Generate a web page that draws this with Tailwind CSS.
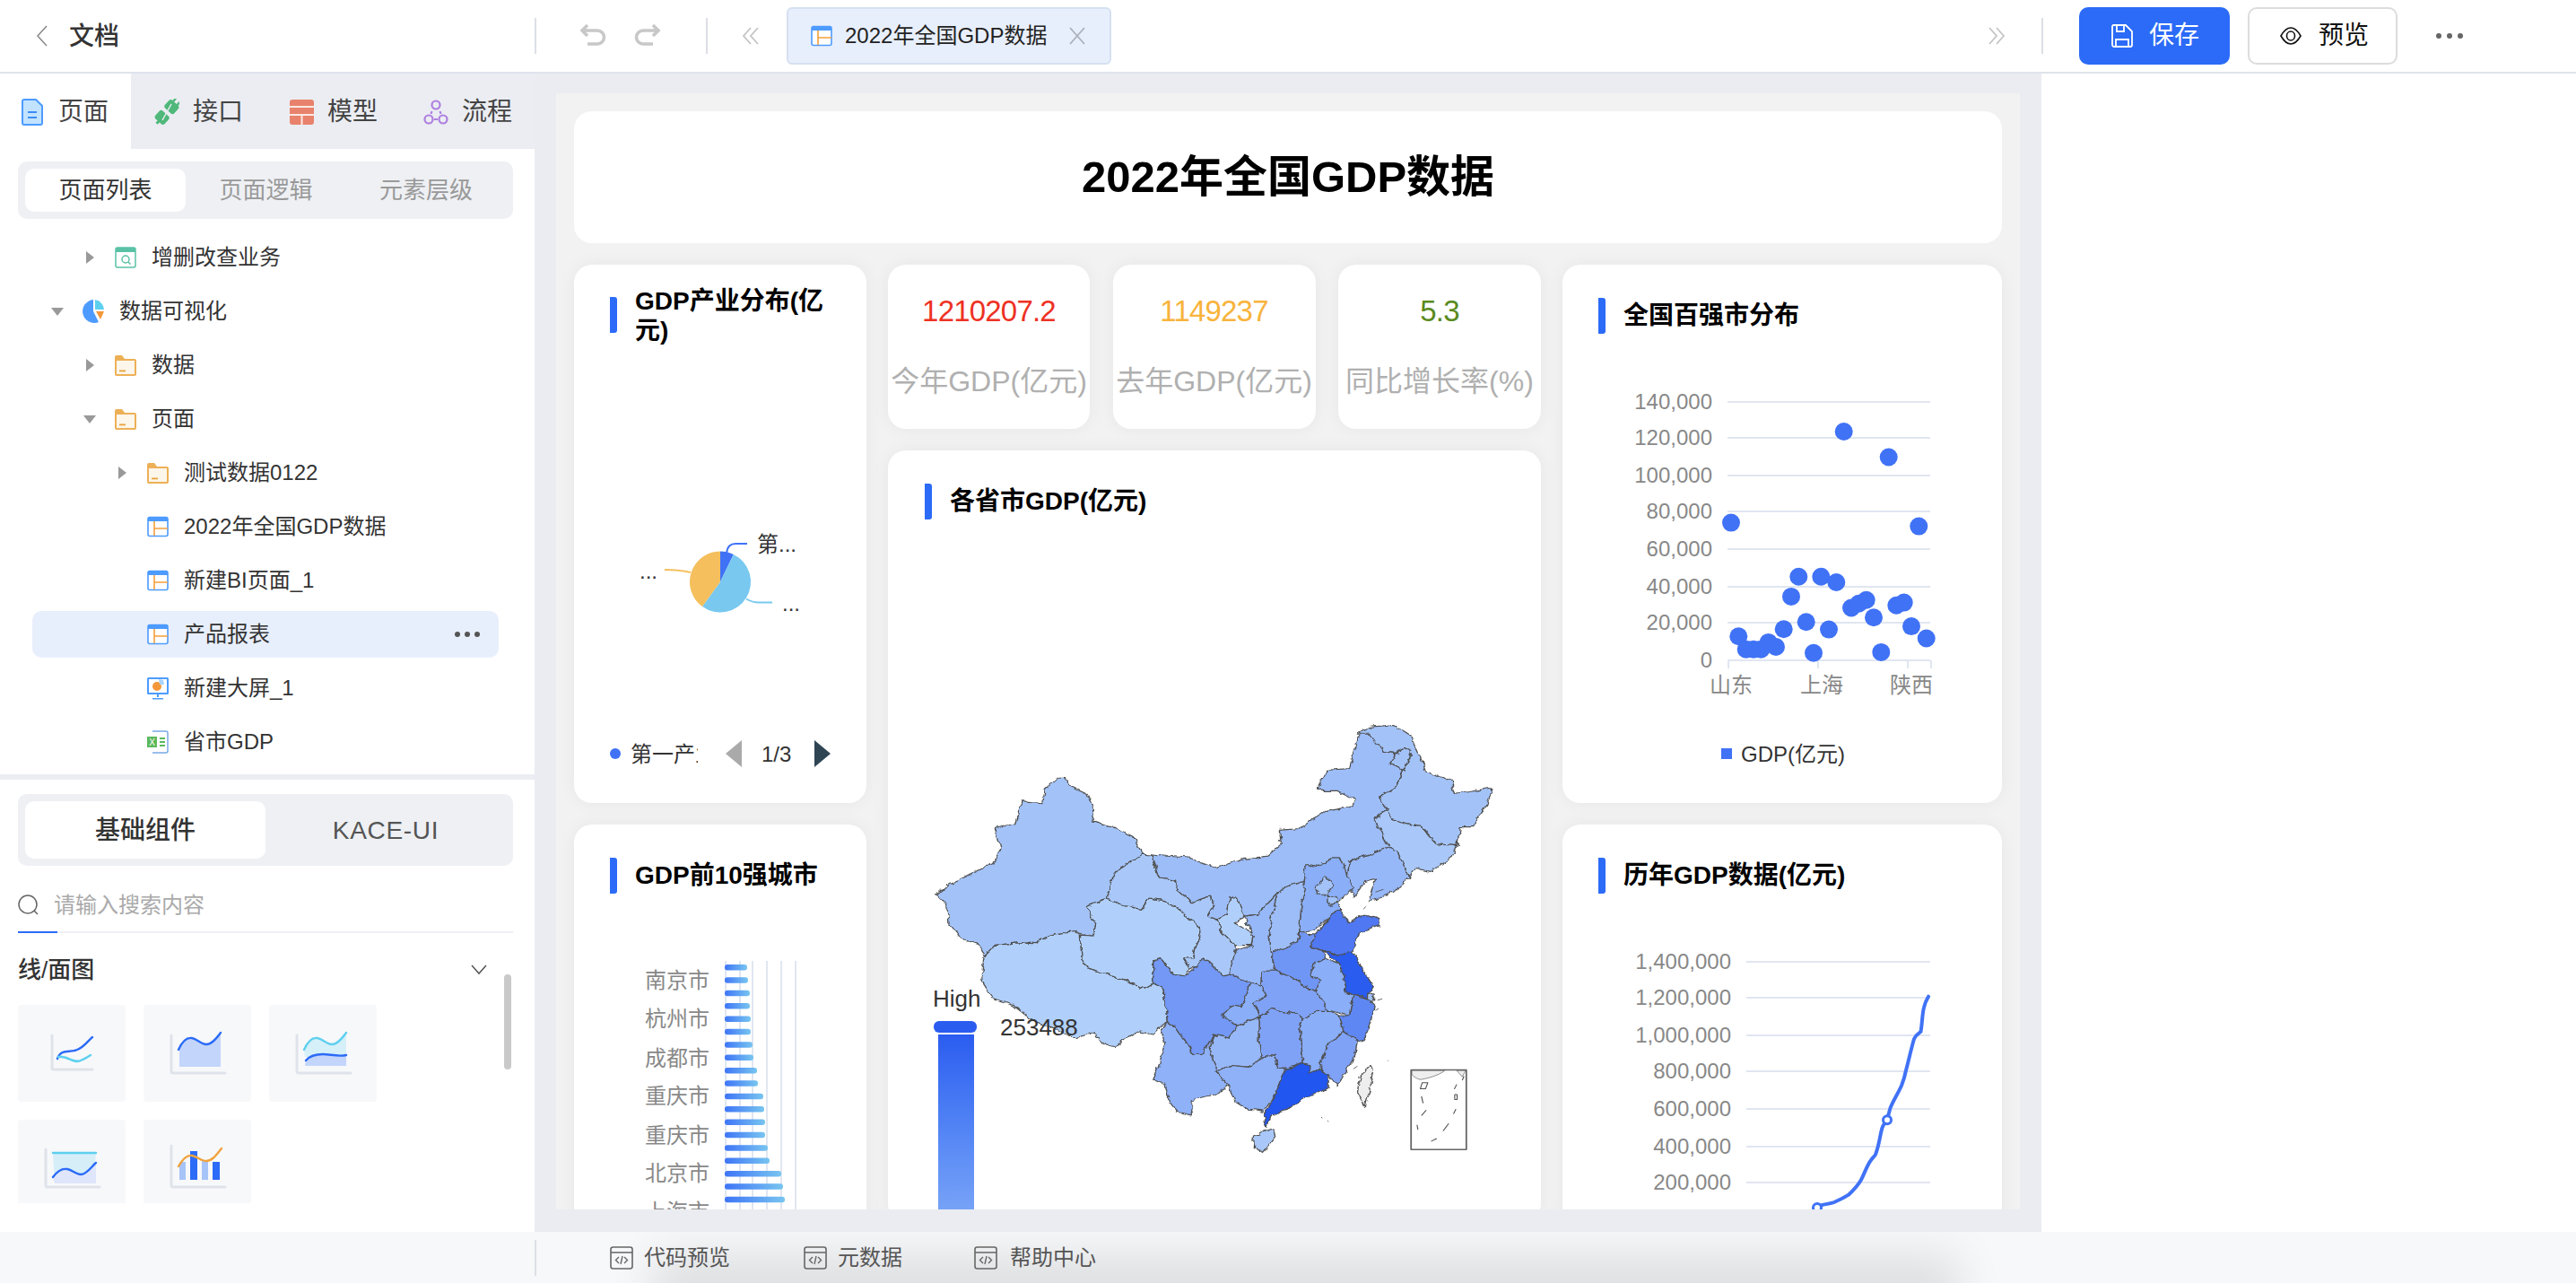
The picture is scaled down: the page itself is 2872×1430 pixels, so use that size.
<!DOCTYPE html>
<html lang="zh-CN">
<head>
<meta charset="UTF-8">
<title>2022年全国GDP数据</title>
<script src="https://cdn.jsdelivr.net/npm/@tailwindcss/browser@4"></script>
</head>
<body class="w-[2872px] h-[1430px] overflow-hidden bg-white text-[#333] font-['Liberation_Sans','Noto_Sans_CJK_SC',sans-serif]">

<svg class="hidden">
  <symbol id="i-page" viewBox="0 0 24 24">
    <rect x="1" y="1.5" width="22" height="21" rx="2" fill="#fff" stroke="#4d9bff" stroke-width="1.6"/>
    <path d="M1 3.5a2 2 0 0 1 2-2h18a2 2 0 0 1 2 2V6H1z" fill="#4d9bff"/>
    <path d="M8 6v16M8 14h15" stroke="#f3a03c" stroke-width="1.6" fill="none"/>
  </symbol>
  <symbol id="i-folder" viewBox="0 0 24 24">
    <path d="M0 3a2 2 0 0 1 2-2h6l3 4h11a2 2 0 0 1 2 2v15a2 2 0 0 1-2 2H2a2 2 0 0 1-2-2z" fill="#edb056"/>
    <rect x="2" y="7" width="20" height="15" fill="#fdf6ea"/>
    <rect x="5" y="17.500" width="7" height="1.800" fill="#e9a33e"/>
  </symbol>
  <symbol id="i-code" viewBox="0 0 26 26">
    <rect x="1" y="1" width="24" height="24" rx="2.500" fill="none" stroke="#666" stroke-width="1.600"/>
    <path d="M1 7h24M10 12l-3.500 3.500L10 19M16 12l3.500 3.500L16 19M14 11l-2 9" fill="none" stroke="#666" stroke-width="1.400"/>
  </symbol>
</svg>

<!-- top bar -->
<header class="flex h-[82px] border-b-2 border-[#dfe3ec] bg-white">
  <div class="flex h-[80px] w-[596px] shrink-0 items-center pl-[40px]">
    <svg class="h-[26px] w-[14px]" viewBox="0 0 14 26" fill="none" stroke="#888" stroke-width="1.500"><path d="M12 2L2 13l10 11"/></svg>
    <span class="ml-[23px] pt-[2px] text-[28px] font-medium">文档</span>
  </div>
  <div class="flex h-[80px] flex-1 items-center">
    <div class="h-[40px] w-[2px] bg-[#dcdfe6]"></div>
    <svg class="ml-[48px] h-[28px] w-[30px]" viewBox="0 0 30 28" fill="none" stroke="#c8c8c8" stroke-width="3.600"><path d="M9 2L3 8l6 6M3 8h17a7 7 0 0 1 0 15H9"/></svg>
    <svg class="ml-[31px] h-[28px] w-[30px]" viewBox="0 0 30 28" fill="none" stroke="#c8c8c8" stroke-width="3.600"><path d="M21 2l6 6-6 6M27 8H10a7 7 0 0 0 0 15h11"/></svg>
    <div class="ml-[50px] h-[40px] w-[2px] bg-[#dcdfe6]"></div>
    <svg class="ml-[38px] h-[20px] w-[20px]" viewBox="0 0 20 20" fill="none" stroke="#c4c4c4" stroke-width="1.800"><path d="M10 1L2 10l8 9M18 1l-8 9 8 9"/></svg>
    <div class="ml-[30px] flex h-[64px] w-[362px] items-center rounded-[6px] border-2 border-[#d5e0f0] bg-[#e8effc] pl-[25px]">
      <svg class="h-[24px] w-[24px]"><use href="#i-page"/></svg>
      <span class="ml-[14px] text-[24px] text-[#222]">2022年全国GDP数据</span>
      <svg class="ml-[24px] h-[20px] w-[20px]" viewBox="0 0 20 20" fill="none" stroke="#aab0ba" stroke-width="1.800"><path d="M2 1l16 18M18 1L2 19"/></svg>
    </div>
    <svg class="ml-auto mr-[40px] h-[20px] w-[20px]" viewBox="0 0 20 20" fill="none" stroke="#c4c4c4" stroke-width="1.800"><path d="M2 1l8 9-8 9M10 1l8 9-8 9"/></svg>
  </div>
  <div class="flex h-[80px] w-[596px] shrink-0 items-center">
    <div class="h-[40px] w-[2px] bg-[#dcdfe6]"></div>
    <button class="ml-[40px] flex h-[64px] w-[168px] items-center rounded-[10px] bg-[#2b6bf7] pl-[36px] text-[28px] text-white">
      <svg class="h-[26px] w-[24px]" viewBox="0 0 24 26" fill="none" stroke="#fff" stroke-width="1.800"><path d="M2 1h14l7 7v15a2 2 0 0 1-2 2H3a2 2 0 0 1-2-2V2zM6 1v7h8V1M5 25v-8h14v8"/></svg>
      <span class="ml-[18px]">保存</span>
    </button>
    <button class="ml-[20px] flex h-[64px] w-[167px] items-center rounded-[10px] border-2 border-[#dcdcdc] bg-white pl-[34px] text-[28px] text-[#111]">
      <svg class="h-[22px] w-[24px]" viewBox="0 0 24 22" fill="none" stroke="#111" stroke-width="1.600"><path d="M1 11C5 4 8 2 12 2s7 2 11 9c-4 7-7 9-11 9s-7-2-11-9z"/><ellipse cx="12" cy="11" rx="4.500" ry="5"/></svg>
      <span class="ml-[19px]">预览</span>
    </button>
    <div class="ml-[43px] flex gap-[6px]">
      <i class="h-[6px] w-[6px] rounded-full bg-[#666]"></i><i class="h-[6px] w-[6px] rounded-full bg-[#666]"></i><i class="h-[6px] w-[6px] rounded-full bg-[#666]"></i>
    </div>
  </div>
</header>

<div class="flex h-[1291px]">
  <!-- left panel -->
  <aside class="flex w-[596px] shrink-0 flex-col bg-white">
    <nav class="flex h-[84px] bg-[#ebedf2] pt-[2px] text-[28px] text-[#444]">
      <div class="-mt-[2px] flex w-[146px] items-center bg-white pl-[24px] pt-[2px]">
        <svg class="h-[30px] w-[24px]" viewBox="0 0 24 30"><path d="M3 1h13l7 7v19a2 2 0 0 1-2 2H3a2 2 0 0 1-2-2V3a2 2 0 0 1 2-2z" fill="#c2e3ff" stroke="#4d9bff" stroke-width="2"/><path d="M7 15h10M7 21h10" stroke="#3b8cf5" stroke-width="2"/></svg>
        <span class="ml-[17px]">页面</span>
      </div>
      <div class="flex w-[150px] items-center pl-[26px]">
        <svg class="h-[30px] w-[28px]" viewBox="0 0 28 30"><g transform="rotate(42 14 15)" fill="#4fb87a"><rect x="7" y="1" width="14" height="12" rx="3"/><rect x="7" y="17" width="14" height="12" rx="3"/><rect x="10" y="-3" width="2.500" height="5"/><rect x="16" y="-3" width="2.500" height="5"/><rect x="12.500" y="28" width="3" height="4"/></g><path d="M9 24l10-18" stroke="#ebedf2" stroke-width="1.500"/></svg>
        <span class="ml-[15px]">接口</span>
      </div>
      <div class="flex w-[150px] items-center pl-[27px]">
        <svg class="h-[28px] w-[27px]" viewBox="0 0 27 28"><rect width="27" height="28" rx="3" fill="#e8826c"/><path d="M0 8h27M0 17h27M13.500 17v11M0 8" stroke="#fbe9e4" stroke-width="2" fill="none"/></svg>
        <span class="ml-[15px]">模型</span>
      </div>
      <div class="flex w-[150px] items-center pl-[26px]">
        <svg class="h-[28px] w-[28px]" viewBox="0 0 28 28" fill="none" stroke="#ae7fe0" stroke-width="2.200"><circle cx="14" cy="6" r="4.500"/><circle cx="6" cy="22" r="4.500"/><circle cx="22" cy="22" r="4.500"/><path d="M9.500 13l-1 3M18.500 13l1 3M12 22h4"/></svg>
        <span class="ml-[15px]">流程</span>
      </div>
    </nav>
    <div class="mx-[20px] mt-[14px] flex h-[64px] w-[552px] items-center rounded-[10px] bg-[#eef0f4] px-[8px] text-[26px] text-[#999]">
      <div class="flex h-[48px] w-[179px] items-center justify-center rounded-[10px] bg-white text-[#333]">页面列表</div>
      <div class="flex h-[48px] w-[179px] items-center justify-center">页面逻辑</div>
      <div class="flex h-[48px] w-[178px] items-center justify-center">元素层级</div>
    </div>

    <!-- tree -->
    <ul class="mx-[36px] flex h-[619px] w-[520px] flex-col gap-y-[8px] pt-[17px] text-[24px] text-[#333]">
      <li class="flex h-[52px] shrink-0 items-center rounded-[10px] pl-[46px]">
        <span class="flex w-[36px] justify-center"><i class="border-y-[7px] border-l-[9px] border-y-transparent border-l-[#999]"></i></span>
        <svg class="ml-[10px] h-[24px] w-[24px]" viewBox="0 0 24 24"><rect x="1" y="1" width="22" height="22" rx="2" fill="#fff" stroke="#59c2a6" stroke-width="1.500"/><path d="M1 3a2 2 0 0 1 2-2h18a2 2 0 0 1 2 2v3H1z" fill="#59c2a6"/><circle cx="12" cy="14" r="4" fill="none" stroke="#59c2a6" stroke-width="1.500"/><path d="M15 17l2.500 2.500" stroke="#59c2a6" stroke-width="1.500"/></svg>
        <span class="ml-[17px]">增删改查业务</span>
      </li>
      <li class="flex h-[52px] shrink-0 items-center rounded-[10px] pl-[10px]">
        <span class="flex w-[36px] justify-center"><i class="border-x-[7px] border-t-[9px] border-x-transparent border-t-[#999]"></i></span>
        <svg class="ml-[10px] h-[28px] w-[24px]" viewBox="0 0 24 28"><path d="M12 14V1a13 13 0 1 0 6 25z" fill="#4d9bff"/><path d="M14 1a12 12 0 0 1 10 11H14z" fill="#5ed0ef"/><path d="M15 14h9l-4 9z" fill="#f3973a"/></svg>
        <span class="ml-[17px]">数据可视化</span>
      </li>
      <li class="flex h-[52px] shrink-0 items-center rounded-[10px] pl-[46px]">
        <span class="flex w-[36px] justify-center"><i class="border-y-[7px] border-l-[9px] border-y-transparent border-l-[#999]"></i></span>
        <svg class="ml-[10px] h-[24px] w-[24px]"><use href="#i-folder"/></svg>
        <span class="ml-[17px]">数据</span>
      </li>
      <li class="flex h-[52px] shrink-0 items-center rounded-[10px] pl-[46px]">
        <span class="flex w-[36px] justify-center"><i class="border-x-[7px] border-t-[9px] border-x-transparent border-t-[#999]"></i></span>
        <svg class="ml-[10px] h-[24px] w-[24px]"><use href="#i-folder"/></svg>
        <span class="ml-[17px]">页面</span>
      </li>
      <li class="flex h-[52px] shrink-0 items-center rounded-[10px] pl-[82px]">
        <span class="flex w-[36px] justify-center"><i class="border-y-[7px] border-l-[9px] border-y-transparent border-l-[#999]"></i></span>
        <svg class="ml-[10px] h-[24px] w-[24px]"><use href="#i-folder"/></svg>
        <span class="ml-[17px]">测试数据0122</span>
      </li>
      <li class="flex h-[52px] shrink-0 items-center rounded-[10px] pl-[128px]">
        <svg class="h-[24px] w-[24px]"><use href="#i-page"/></svg>
        <span class="ml-[17px]">2022年全国GDP数据</span>
      </li>
      <li class="flex h-[52px] shrink-0 items-center rounded-[10px] pl-[128px]">
        <svg class="h-[24px] w-[24px]"><use href="#i-page"/></svg>
        <span class="ml-[17px]">新建BI页面_1</span>
      </li>
      <li class="flex h-[52px] shrink-0 items-center rounded-[10px] bg-[#e8effc] pl-[128px] pr-[21px]">
        <svg class="h-[24px] w-[24px]"><use href="#i-page"/></svg>
        <span class="ml-[17px]">产品报表</span>
        <span class="ml-auto flex gap-[5px]"><i class="h-[6px] w-[6px] rounded-full bg-[#555]"></i><i class="h-[6px] w-[6px] rounded-full bg-[#555]"></i><i class="h-[6px] w-[6px] rounded-full bg-[#555]"></i></span>
      </li>
      <li class="flex h-[52px] shrink-0 items-center rounded-[10px] pl-[128px]">
        <svg class="h-[26px] w-[24px]" viewBox="0 0 24 26"><rect x="0" y="1" width="24" height="19" rx="1.500" fill="#4d9bff"/><rect x="2" y="3" width="20" height="15" fill="#fff"/><circle cx="11" cy="11" r="5" fill="#f3973a"/><path d="M13 3l5 1 1 5h-5z" fill="#a9d2ff"/><path d="M11 20h2v3h-2zM6 24h12v1.500H6z" fill="#4d9bff"/></svg>
        <span class="ml-[17px]">新建大屏_1</span>
      </li>
      <li class="flex h-[52px] shrink-0 items-center rounded-[10px] pl-[128px]">
        <svg class="h-[26px] w-[24px]" viewBox="0 0 24 26"><path d="M6 1h15a2 2 0 0 1 2 2v20a2 2 0 0 1-2 2H6" fill="#fff" stroke="#7aa9e8" stroke-width="1.500"/><rect x="0" y="7" width="11" height="12" fill="#5cb85c"/><text x="5.500" y="17" font-size="10" fill="#fff" text-anchor="middle">X</text><path d="M14 9h6M14 13h6M14 17h6" stroke="#5cb85c" stroke-width="1.800"/></svg>
        <span class="ml-[17px]">省市GDP</span>
      </li>
    </ul>

    <div class="h-[6px] bg-[#ebedf2]"></div>

    <div class="relative flex-1 px-[20px] pt-[16px]">
      <div class="flex h-[80px] w-[552px] items-center rounded-[10px] bg-[#eef0f4] px-[8px] text-[28px]">
        <div class="flex h-[64px] w-[268px] items-center justify-center rounded-[10px] bg-white pt-[2px] font-medium">基础组件</div>
        <div class="flex h-[64px] flex-1 items-center justify-center pt-[2px] tracking-[0.7px] text-[#555]">KACE-UI</div>
      </div>
      <div class="mt-[16px] flex h-[59px] w-[552px] items-center border-b-2 border-[#eef0f4] pb-[2px]">
        <svg class="h-[24px] w-[24px]" viewBox="0 0 24 24" fill="none" stroke="#666" stroke-width="1.500"><circle cx="11" cy="11" r="10"/><path d="M18 18l4 4"/></svg>
        <span class="ml-[16px] text-[24px] text-[#aaa]">请输入搜索内容</span>
      </div>
      <div class="-mt-[2px] h-[2px] w-[44px] bg-[#2b6bf7]"></div>
      <div class="mt-[26px] flex h-[30px] w-[552px] items-center justify-between pr-[29px]">
        <span class="text-[26px] font-medium">线/面图</span>
        <svg class="h-[12px] w-[18px]" viewBox="0 0 18 12" fill="none" stroke="#555" stroke-width="1.500"><path d="M1 1l8 9 8-9"/></svg>
      </div>
      <div class="mt-[24px] grid h-[221px] grid-cols-[120px_120px_120px] gap-x-[20px] gap-y-[20px] overflow-hidden">
        <div class="h-[108px] rounded-[4px] bg-[#f7f8fa]">
          <svg class="h-full w-full" viewBox="0 0 120 108" fill="none" stroke-linecap="round"><path d="M38 34v36q0 2 2 2h43" stroke="#dfe3ea" stroke-width="3"/><path d="M44 60C48 48 58 54 66 50c8-3 12-10 17-14" stroke="#2b6bf7" stroke-width="2.400"/><path d="M45 58c10-2 17 8 25 4 5-2 8-4 11-6" stroke="#5ed0ef" stroke-width="2.400"/></svg>
        </div>
        <div class="h-[108px] rounded-[4px] bg-[#f7f8fa]">
          <svg class="h-full w-full" viewBox="0 0 120 108" fill="none" stroke-linecap="round"><path d="M31 34v40q0 2 2 2h58" stroke="#dfe3ea" stroke-width="3"/><path d="M40 50c4-9 9-14 14-13 6 1 10 7 16 7 7 0 12-8 16-13v38H40z" fill="#c3d5fa"/><path d="M39 50c4-9 9-14 15-13 6 1 10 7 16 7 7 0 12-8 16-13" stroke="#2b6bf7" stroke-width="2.400"/></svg>
        </div>
        <div class="h-[108px] rounded-[4px] bg-[#f7f8fa]">
          <svg class="h-full w-full" viewBox="0 0 120 108" fill="none" stroke-linecap="round"><path d="M31 34v40q0 2 2 2h58" stroke="#dfe3ea" stroke-width="3"/><path d="M39 50c4-9 9-14 15-13 6 1 10 7 16 7 7 0 12-8 16-13v27H40z" fill="#d5f0f8"/><path d="M41 62c5-6 12-7 19-7 8 0 17 3 26 1v12H40z" fill="#c3d5fa"/><path d="M39 50c4-9 9-14 15-13 6 1 10 7 16 7 7 0 12-8 16-13" stroke="#5ed0ef" stroke-width="2.400"/><path d="M41 62c5-6 12-7 19-7 8 0 17 3 26 1" stroke="#2b6bf7" stroke-width="2.400"/></svg>
        </div>
        <div class="h-[108px] rounded-[4px] bg-[#f7f8fa]">
          <svg class="h-full w-full" viewBox="0 0 120 108" fill="none" stroke-linecap="round"><path d="M31 33v40q0 2 2 2h58" stroke="#dfe3ea" stroke-width="3"/><path d="M39 37h48l-3 34H41z" fill="#d5eef8"/><path d="M39 64c5-7 10-10 16-9 6 1 9 6 15 6 7 0 12-9 17-13v23H41z" fill="#dfe6fb"/><path d="M39 37h48" stroke="#5ed0ef" stroke-width="2.400"/><path d="M39 64c5-7 10-10 16-9 6 1 9 6 15 6 7 0 12-9 17-13" stroke="#2b6bf7" stroke-width="2.400"/></svg>
        </div>
        <div class="h-[108px] rounded-[4px] bg-[#f7f8fa]">
          <svg class="h-full w-full" viewBox="0 0 120 108" fill="none" stroke-linecap="round"><path d="M31 29v44q0 2 2 2h58" stroke="#dfe3ea" stroke-width="3"/><path d="M40 47h7v20h-7zM65 45h7v22h-7z" fill="#a6c4f8"/><path d="M52 35h8v32h-8zM77 47h8v20h-8z" fill="#2b6bf7"/><path d="M39 52c4-7 9-13 15-12 6 1 10 6 16 6 7 0 12-8 17-14" stroke="#f0a33e" stroke-width="2.400"/></svg>
        </div>
      </div>
      <div class="absolute left-[562px] top-[217px] h-[106px] w-[8px] rounded-full bg-[#c9c9c9]"></div>
    </div>
  </aside>

  <!-- canvas -->
  <main class="flex w-[1680px] shrink-0 flex-col bg-[#eaecf1] px-[24px] pb-[25px] pt-[22px]">
    <div class="flex-1 overflow-hidden bg-[#f2f2f2] p-[20px]">
      <div class="flex h-[147px] items-center justify-center rounded-[20px] bg-white text-[49px] font-bold text-black">2022年全国GDP数据</div>
      <div class="mt-[24px] grid grid-cols-[326px_728px_490px] gap-x-[24px]">

        <div class="flex flex-col gap-y-[24px]">
          <section class="relative h-[600px] rounded-[20px] bg-white shadow-[0_0_20px_rgba(0,0,0,0.05)]">
            <div class="flex gap-x-[20px] pl-[40px] pr-[24px] pt-[24px]">
              <i class="mt-[12px] h-[40px] w-[8px] shrink-0 rounded-r-[3px] bg-[#2b6bf7]"></i>
              <h3 class="text-[28px] font-bold leading-[33px] text-black">GDP产业分布(亿元)</h3>
            </div>
            <svg class="absolute left-0 top-0 h-[600px] w-[326px]" viewBox="640 295 326 600" fill="none">
              <path d="M803,648.500 L803,614.500 A34,34 0 0 1 817.800,617.900Z" fill="#4072f6"/>
              <path d="M803,648.500 L817.800,617.900 A34,34 0 1 1 783,676Z" fill="#78c8f0"/>
              <path d="M803,648.500 L783,676 A34,34 0 0 1 803,614.500Z" fill="#f4bf5c"/>
              <path d="M810,616c1-7 4-10 10-10h13" stroke="#4072f6" stroke-width="2"/>
              <path d="M770,638c-8-2-14-3-29-3" stroke="#f4bf5c" stroke-width="2"/>
              <path d="M832,667.500c5 3 9 4 14 4h15" stroke="#78c8f0" stroke-width="2"/>
              <text x="844" y="615" font-size="24" fill="#333">第...</text>
              <text x="713" y="645" font-size="24" fill="#333">...</text>
              <text x="872" y="681" font-size="24" fill="#333">...</text>
              <circle cx="686" cy="840" r="6" fill="#4072f6"/>
              <clipPath id="legend-clip"><rect x="703" y="820" width="75" height="40"/></clipPath>
              <text x="703" y="849" font-size="24" fill="#333" clip-path="url(#legend-clip)">第一产业</text>
              <path d="M827,825v30l-18-15z" fill="#aaa"/>
              <text x="849" y="849" font-size="24" fill="#333">1/3</text>
              <path d="M908,825v30l18-15z" fill="#2f4554"/>
            </svg>
          </section>
          <section class="relative h-[600px] rounded-[20px] bg-white shadow-[0_0_20px_rgba(0,0,0,0.05)]">
            <div class="flex items-center gap-x-[20px] pl-[40px] pt-[36px]">
              <i class="h-[40px] w-[8px] shrink-0 rounded-r-[3px] bg-[#2b6bf7]"></i>
              <h3 class="text-[28px] font-bold text-black">GDP前10强城市</h3>
            </div>
            <svg id="bars" class="absolute left-0 top-0 h-[600px] w-[326px]" viewBox="640 919 326 600" fill="none">
              <defs><linearGradient id="bar-fill"><stop offset="0" stop-color="#3e75f7"/><stop offset="1" stop-color="#78c5f0"/></linearGradient></defs>
              <g fill="#888" font-size="24" text-anchor="end">
                <text x="791" y="1101">南京市</text><text x="791" y="1144">杭州市</text><text x="791" y="1188">成都市</text><text x="791" y="1230">重庆市</text><text x="791" y="1274">重庆市</text><text x="791" y="1316">北京市</text><text x="791" y="1359">上海市</text>
              </g>
            </svg>
          </section>
        </div>

        <div>
          <div class="grid h-[183px] grid-cols-[225px_226px_226px] justify-between text-center">
            <div class="rounded-[20px] bg-white pt-[32px] shadow-[0_0_20px_rgba(0,0,0,0.05)]">
              <div class="text-[33px] leading-[40px] tracking-[-0.8px] text-[#ee3124]">1210207.2</div>
              <div class="mt-[38px] text-[32px] leading-[40px] text-[#b0b0b0]">今年GDP(亿元)</div>
            </div>
            <div class="rounded-[20px] bg-white pt-[32px] shadow-[0_0_20px_rgba(0,0,0,0.05)]">
              <div class="text-[33px] leading-[40px] tracking-[-0.8px] text-[#f8b33c]">1149237</div>
              <div class="mt-[38px] text-[32px] leading-[40px] text-[#b0b0b0]">去年GDP(亿元)</div>
            </div>
            <div class="rounded-[20px] bg-white pt-[32px] shadow-[0_0_20px_rgba(0,0,0,0.05)]">
              <div class="text-[33px] leading-[40px] tracking-[-0.8px] text-[#5a8a1e]">5.3</div>
              <div class="mt-[38px] text-[32px] leading-[40px] text-[#b0b0b0]">同比增长率(%)</div>
            </div>
          </div>
          <section class="relative mt-[24px] h-[860px] rounded-[20px] bg-white shadow-[0_0_20px_rgba(0,0,0,0.05)]">
            <div class="flex items-center gap-x-[20px] pl-[41px] pt-[36px]">
              <i class="h-[40px] w-[8px] shrink-0 rounded-r-[3px] bg-[#2b6bf7]"></i>
              <h3 class="text-[28px] font-bold text-black">各省市GDP(亿元)</h3>
            </div>
            <svg class="absolute left-[10px] top-[278px] h-[600px] w-[700px]" viewBox="0 0 1568 1568" preserveAspectRatio="none" stroke="#505050" stroke-width="3" stroke-linejoin="round">
              <defs>
                <filter id="rough" filterUnits="userSpaceOnUse" x="0" y="0" width="1568" height="1568">
                  <feTurbulence type="fractalNoise" baseFrequency="0.045" numOctaves="3" seed="4" result="noise"/>
                  <feDisplacementMap in="SourceGraphic" in2="noise" scale="16" xChannelSelector="R" yChannelSelector="G"/>
                </filter>
              </defs>
              <g filter="url(#rough)">
              <path fill="#a3c3f8" d="M97,570L130,535 170,515 245,470 260,430 245,375 295,360 312,295 365,300 370,260 400,228 420,228 430,250 475,275 492,320 488,355 540,372 590,400 612,450 555,495 535,525 525,580 472,602 497,655 490,688 430,675 385,685 345,710 300,708 245,715 218,745 200,708 160,695 130,650 125,600Z"/>
              <path fill="#b0d0fb" d="M218,745L245,715 300,708 345,710 385,685 430,675 458,685 462,760 480,785 530,800 590,825 610,845 640,825 665,840 675,935 640,975 600,965 545,1010 515,1005 490,965 445,990 400,960 340,935 290,890 240,870 210,815Z"/>
              <path fill="#b0d0fb" d="M472,602L525,580 570,600 610,610 630,578 670,585 720,625 760,670 740,750 715,750 730,785 720,805 690,800 660,755 640,760 640,825 610,845 590,825 530,800 480,785 462,760 458,685 490,688 497,655Z"/>
              <path fill="#a9c8f9" d="M612,450L635,452 655,520 695,525 700,555 735,590 785,570 790,600 775,630 800,640 815,680 845,715 845,730 835,800 815,805 790,775 765,750 750,775 730,785 715,750 740,750 760,670 720,625 670,585 630,578 610,610 570,600 525,580 535,525 555,495Z"/>
              <path fill="#9dbdf8" d="M635,452L730,460 800,490 860,465 925,455 960,420 955,380 1005,375 1070,325 1140,310 1145,290 1100,265 1050,265 1075,205 1130,200 1150,110 1180,80 1215,150 1245,155 1235,185 1265,205 1250,250 1205,285 1225,320 1190,345 1230,430 1160,460 1130,470 1125,515 1105,460 1085,460 1055,485 1020,480 1015,530 970,545 950,565 900,625 865,630 850,575 830,580 825,625 800,640 775,630 790,600 785,570 735,590 700,555 695,525 655,520Z"/>
              <path fill="#a3c3f8" d="M1150,100L1180,80 1240,72 1285,105 1320,205 1385,240 1395,275 1490,255 1470,310 1440,370 1405,370 1400,425 1345,420 1310,370 1240,350 1225,320 1205,285 1250,250 1265,205 1285,150 1265,140 1245,155 1215,150 1180,100Z"/>
              <path fill="#a3c3f8" d="M1245,155L1265,140 1285,150 1265,205 1235,185Z"/>
              <path fill="#a9c8f9" d="M1190,345L1225,320 1240,350 1310,370 1345,420 1400,425 1385,460 1330,500 1295,490 1280,515 1250,440 1230,430Z"/>
              <path fill="#97b8f8" d="M1130,470L1160,460 1230,430 1250,440 1280,515 1240,560 1180,590 1195,520 1170,530 1140,575 1125,515Z"/>
              <path fill="#8aaef7" d="M1020,480L1055,485 1085,460 1105,460 1125,515 1140,545 1100,590 1105,610 1085,625 1045,670 1005,680 1010,590 1020,550 1015,530Z"/>
              <path fill="#a3c3f8" d="M1045,545L1070,515 1090,540 1075,565 1050,565Z"/>
              <path fill="#a3c3f8" d="M1075,565L1095,575 1100,590 1085,600 1075,590Z"/>
              <path fill="#9dbdf8" d="M950,565L970,545 1015,530 1020,550 1010,590 1005,680 1000,705 935,738 930,690 935,630Z"/>
              <path fill="#97b8f8" d="M900,625L950,565 935,630 930,690 935,738 945,790 910,790 910,835 885,825 830,800 845,730 885,715 890,680 865,630Z"/>
              <path fill="#b0d0fb" d="M830,580L850,575 865,630 845,650 890,680 885,715 845,715 815,680 800,640 825,625Z"/>
              <path fill="#5078f2" d="M1085,625L1105,610 1130,650 1165,625 1205,640 1205,655 1155,680 1135,735 1100,745 1065,730 1030,720 1045,685Z"/>
              <path fill="#7096f5" d="M1005,680L1045,685 1030,720 1065,730 1070,755 1045,765 1035,800 1055,815 1050,850 1010,830 1000,815 945,790 935,738 1000,705Z"/>
              <path fill="#8aaef7" d="M1070,755L1105,770 1115,800 1120,850 1140,860 1130,920 1080,905 1045,850 1055,815 1035,800 1045,765Z"/>
              <path fill="#2b5cf0" d="M1065,730L1100,745 1135,735 1165,790 1190,835 1175,870 1140,860 1120,850 1115,800 1105,770Z"/>
              <path fill="#a3c3f8" d="M1175,855L1192,860 1190,875 1175,875Z"/>
              <path fill="#5f87f3" d="M1140,860L1175,870 1192,890 1185,940 1165,990 1150,995 1115,965 1105,920 1130,920Z"/>
              <path fill="#7fa2f6" d="M1115,965L1150,995 1145,1030 1125,1075 1100,1125 1080,1095 1055,1080 1075,1005Z"/>
              <path fill="#8aaef7" d="M1050,905L1080,905 1105,920 1115,965 1075,1005 1055,1080 1030,1090 1015,1060 1005,965 1010,930Z"/>
              <path fill="#7fa2f6" d="M910,790L945,790 1000,815 1010,830 1045,850 1080,905 1050,905 1010,930 1000,915 970,910 935,900 905,925 890,885 925,860 910,835Z"/>
              <path fill="#7fa2f6" d="M905,925L935,900 970,910 1000,915 1010,930 1005,965 1015,1060 970,1075 950,1075 945,1030 910,1045 905,1000Z"/>
              <path fill="#8aaef7" d="M885,825L910,835 925,860 890,885 905,925 880,935 850,950 815,920 830,890 860,895Z"/>
              <path fill="#97b8f8" d="M780,1015L790,975 830,985 850,950 880,935 905,925 905,1000 910,1045 880,1070 835,1065 800,1085Z"/>
              <path fill="#7398f5" d="M640,760L660,755 690,800 720,805 750,775 765,750 790,775 815,805 835,800 885,825 860,895 830,890 815,920 850,950 830,985 790,975 765,1030 740,1035 700,960 675,935 665,840 640,825Z"/>
              <path fill="#8fb1f7" d="M675,935L700,960 740,1035 765,1030 790,975 780,1015 800,1085 830,1125 790,1150 740,1165 735,1210 700,1200 680,1170 670,1120 640,1105 655,1050 670,1000 660,970Z"/>
              <path fill="#8fb1f7" d="M800,1085L835,1065 880,1070 910,1045 945,1030 950,1075 970,1075 945,1150 915,1200 880,1195 845,1170 830,1125Z"/>
              <path fill="#2356f0" d="M970,1075L1010,1060 1030,1065 1030,1090 1055,1080 1080,1095 1080,1130 1010,1165 985,1190 935,1210 925,1245 915,1215 945,1150Z"/>
              <path fill="#a9c8f9" d="M893,1270L940,1248 945,1275 915,1318 890,1305Z"/>
              <path fill="#eeeeee" d="M1185,1065L1192,1080 1170,1185 1150,1140 1160,1090Z"/>
              </g>
              <path fill="none" stroke-width="2" d="M1195,560l20,-8M1165,610l6,-8M1200,875l12,-4M1195,905l8,-6M1140,1075l10,-8M1060,1215l2,4M1075,1226l3,3M1225,1050l2,2"/>
              <rect x="1284" y="1078" width="138" height="232" fill="#fff" stroke="#666" stroke-width="4"/>
              <path fill="#eeeeee" stroke-width="1.500" d="M1286,1080h82c-15,15 -50,25 -62,26 -10,-4 -20,-10 -20,-18zM1398,1080h22l-8,18z"/>
              <path fill="none" stroke-width="2.500" d="M1312,1115h14l-6,18h-13zM1310,1155l4,20M1322,1195l-12,16M1299,1238l2,14M1378,1234l-14,22M1348,1278l-14,8M1398,1120l-6,14M1416,1096l-4,12M1393,1150h6v14h-6zM1396,1192l-6,14"/>
            </svg>
            <div class="absolute left-[50px] top-[596px] text-[26px] leading-[30px] text-[#333]">High</div>
            <div class="absolute left-[51px] top-[636px] h-[13px] w-[48px] rounded-[6px] bg-[#2b5cf0]"></div>
            <div class="absolute left-[56px] top-[651px] h-[300px] w-[40px] bg-gradient-to-b from-[#2b5cf0] to-[#a3c3f8]"></div>
            <div class="absolute left-[125px] top-[628px] text-[26px] leading-[30px] text-[#333]">253488</div>
          </section>
        </div>

        <div class="flex flex-col gap-y-[24px]">
          <section class="relative h-[600px] rounded-[20px] bg-white shadow-[0_0_20px_rgba(0,0,0,0.05)]">
            <div class="flex items-center gap-x-[20px] pl-[40px] pt-[36px]">
              <i class="h-[40px] w-[8px] shrink-0 rounded-r-[3px] bg-[#2b6bf7]"></i>
              <h3 class="text-[28px] font-bold text-black">全国百强市分布</h3>
            </div>
            <svg id="scatter" class="absolute left-0 top-0 h-[600px] w-[490px]" viewBox="1742 295 490 600" fill="none">
              <g stroke="#e0e6f1" stroke-width="2"><path d="M1926 448h226M1926 488h226M1926 530h226M1926 570h226M1926 612h226M1926 654h226M1926 694h226M1926 736h226M1927 736v9M2027 736v9M2127 736v9M2153 736v9"/></g>
              <g fill="#888" font-size="24" text-anchor="end">
                <text x="1909" y="456">140,000</text><text x="1909" y="496">120,000</text><text x="1909" y="538">100,000</text><text x="1909" y="578">80,000</text><text x="1909" y="620">60,000</text><text x="1909" y="662">40,000</text><text x="1909" y="702">20,000</text><text x="1909" y="744">0</text>
              </g>
              <g fill="#888" font-size="24" text-anchor="middle">
                <text x="1930" y="772">山东</text><text x="2031" y="772">上海</text><text x="2131" y="772">陕西</text>
              </g>
              <rect x="1919" y="834" width="12" height="12" fill="#4072f6"/>
              <text x="1941" y="849" font-size="24" fill="#333">GDP(亿元)</text>
            </svg>
          </section>
          <section class="relative h-[600px] rounded-[20px] bg-white shadow-[0_0_20px_rgba(0,0,0,0.05)]">
            <div class="flex items-center gap-x-[20px] pl-[40px] pt-[36px]">
              <i class="h-[40px] w-[8px] shrink-0 rounded-r-[3px] bg-[#2b6bf7]"></i>
              <h3 class="text-[28px] font-bold text-black">历年GDP数据(亿元)</h3>
            </div>
            <svg class="absolute left-0 top-0 h-[600px] w-[490px]" viewBox="1742 919 490 600" fill="none">
              <path d="M1947 1072h205M1947 1112h205M1947 1154h205M1947 1194h205M1947 1236h205M1947 1278h205M1947 1318h205" stroke="#e0e6f1" stroke-width="2"/>
              <g fill="#888" font-size="24" text-anchor="end">
                <text x="1930" y="1080">1,400,000</text><text x="1930" y="1120">1,200,000</text><text x="1930" y="1162">1,000,000</text><text x="1930" y="1202">800,000</text><text x="1930" y="1244">600,000</text><text x="1930" y="1286">400,000</text><text x="1930" y="1326">200,000</text>
              </g>
              <path d="M2026 1345C2032 1342 2040 1342 2045 1340C2052 1337 2056 1335 2061 1331.700C2067 1326 2071 1322 2075 1315C2079 1307 2082 1298 2086 1293C2089 1289 2090 1289 2091 1286.700C2095 1277 2096 1265 2098.600 1256.700C2100 1253 2102 1251 2104 1248.300C2105 1244 2106 1240 2107.500 1235C2111 1226 2116 1219 2120 1210C2122 1205 2124 1198 2125 1193C2128 1182 2131 1168 2134 1158C2136 1153 2139 1152 2141.400 1150C2143 1143 2143 1130 2145 1123C2146 1118 2148 1114 2150 1110.700" stroke="#4072f6" stroke-width="4" stroke-linecap="round"/>
              <circle cx="2026" cy="1346" r="4.500" fill="#fff" stroke="#4072f6" stroke-width="3"/>
              <circle cx="2104" cy="1248.300" r="4.500" fill="#fff" stroke="#4072f6" stroke-width="3"/>
            </svg>
          </section>
        </div>

      </div>
    </div>
  </main>

  <div class="flex-1 bg-white"></div>
</div>

<!-- footer -->
<footer class="relative flex h-[57px] items-center overflow-hidden bg-[#f7f8fa] text-[24px] text-[#555]">
  <div class="absolute left-[760px] right-[720px] top-[58px] h-[10px] shadow-[0_0_50px_32px_rgba(0,0,0,0.1)]"></div>
  <div class="relative ml-[596px] h-[40px] w-[2px] bg-[#dcdfe6]"></div>
  <svg class="relative ml-[82px] h-[26px] w-[26px]"><use href="#i-code"/></svg>
  <span class="relative ml-[12px]">代码预览</span>
  <svg class="relative ml-[82px] h-[26px] w-[26px]"><use href="#i-code"/></svg>
  <span class="relative ml-[12px]">元数据</span>
  <svg class="relative ml-[80px] h-[26px] w-[26px]"><use href="#i-code"/></svg>
  <span class="relative ml-[14px]">帮助中心</span>
</footer>

<script>
  const svgNs = 'http://www.w3.org/2000/svg';

  function addNode(parent, name, attrs) {
    const node = document.createElementNS(svgNs, name);
    Object.entries(attrs).forEach(([key, value]) => node.setAttribute(key, value));
    parent.appendChild(node);
  }

  // bars of the top 10 chart, end x per row
  const bars = document.getElementById('bars');
  [809, 825, 839, 855, 871, 887].forEach(x => {
    addNode(bars, 'path', { d: `M${x} 1071V1400`, stroke: '#e0e6f1', 'stroke-width': 2 });
  });
  [833, 834, 836, 836, 837, 837, 839, 840, 844, 845, 851, 852, 853, 853, 856, 858, 871, 873, 875].forEach((end, i) => {
    addNode(bars, 'rect', { x: 808, y: 1075 + i * 14.37, width: end - 808, height: 6.500, rx: 3, fill: 'url(#bar-fill)' });
  });

  const scatter = document.getElementById('scatter');
  [[1930,582.6],[1938.3,709.2],[1946.7,723.8],[1955,723.8],[1963.3,723.8],[1971.7,715.9],[1980,721],[1988.7,701.2],[1997,664.9],[2005.3,642.7],
   [2013.7,693.3],[2022,727.7],[2030.3,642.7],[2039,701.6],[2047.3,649],[2055.7,481],[2064,677.5],[2072.3,672.8],[2080.7,668.8],[2089,688.2],
   [2097.3,726.9],[2105.7,509.5],[2114.3,674.7],[2122.7,671.6],[2131,698.1],[2139.3,586.6],[2147.7,711.5]].forEach(([cx, cy]) => {
    addNode(scatter, 'circle', { cx, cy, r: 10, fill: '#4072f6' });
  });
</script>
</body>
</html>
